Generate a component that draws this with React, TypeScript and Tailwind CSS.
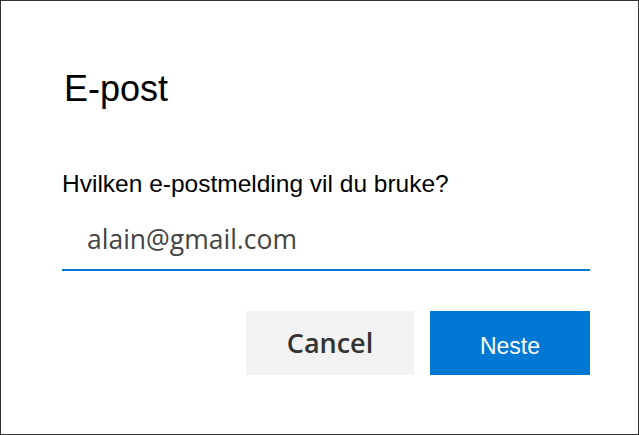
export default function App() {
  return (
    <div className="w-[639px] h-[435px] border border-[#333333] bg-white overflow-hidden">
      <div className="flex flex-col pl-[61px] pr-[48px]">
        <h1 className="mt-[68px] pl-[2px] text-[36px] leading-[40px] text-black font-['Liberation_Sans',Arial,sans-serif] font-normal">
          E-post
        </h1>
        <label className="mt-[61px] text-[24.5px] leading-[28px] text-black font-['Liberation_Sans',Arial,sans-serif]">
          Hvilken e-postmelding vil du bruke?
        </label>
        <div className="mt-[24px] border-b-2 border-[#0078d4] pl-[25px] pb-[13px]">
          <span className="block text-[26.5px] leading-[34px] text-[#444444] font-['Open_Sans','Noto_Sans',sans-serif]">
            alain@gmail.com
          </span>
        </div>
        <div className="mt-[40px] flex justify-end gap-4">
          <button className="w-[168px] h-[64px] bg-[#f2f2f2] text-[#333333] text-[27px] font-semibold font-['Open_Sans','Noto_Sans',sans-serif]">
            Cancel
          </button>
          <button className="w-[160px] h-[64px] bg-[#0078d4] text-white text-[23px] pt-[7px] font-['Liberation_Sans',Arial,sans-serif]">
            Neste
          </button>
        </div>
      </div>
    </div>
  );
}
